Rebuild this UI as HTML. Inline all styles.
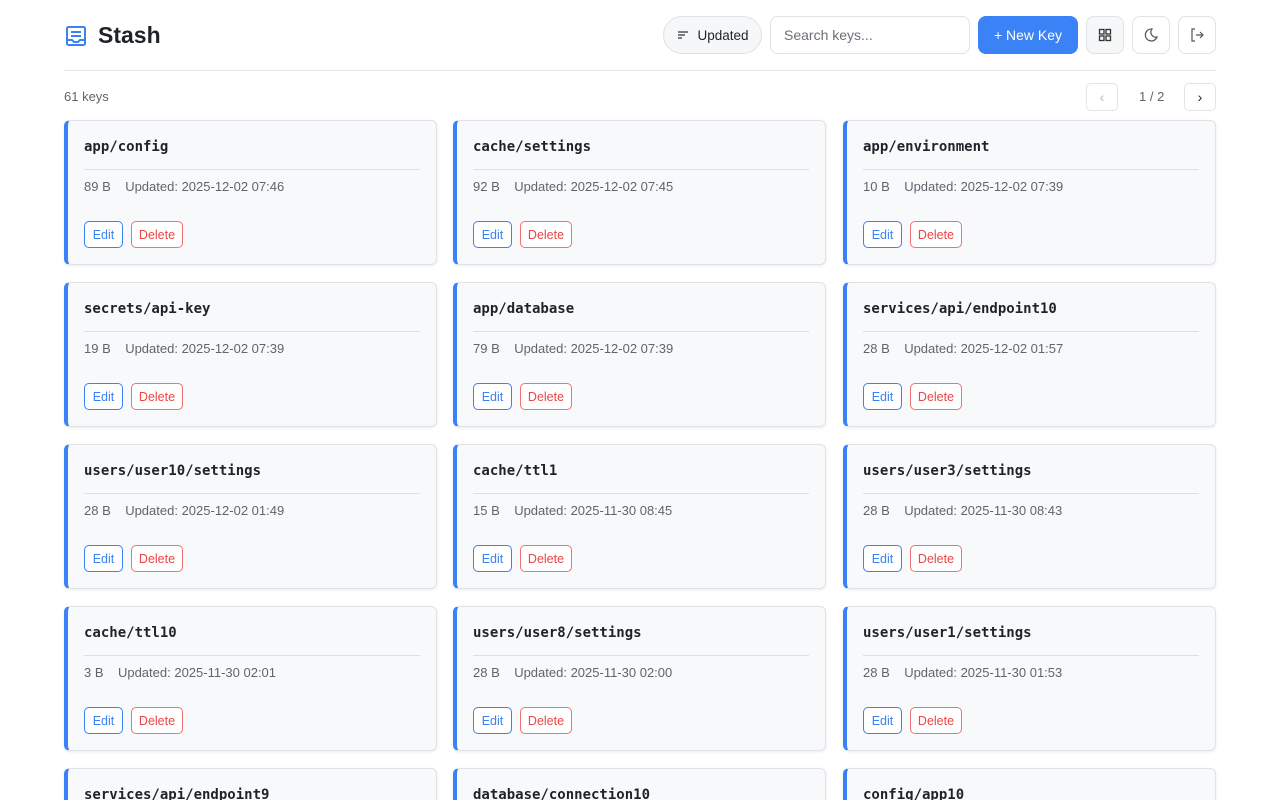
<!DOCTYPE html>
<html style="overflow:hidden;height:800px"><head><meta charset="utf-8"><style>
*{box-sizing:border-box;margin:0;padding:0}
body{width:1280px;height:800px;overflow:hidden;background:#fff;font-family:"Liberation Sans",sans-serif;color:#1f2329;position:relative}
.hdr{position:absolute;left:64px;right:64px;top:0;height:71px;border-bottom:1px solid #e3e5e8}
.logo{position:absolute;left:0;top:22px;display:flex;align-items:center}
.logo span{font-size:23px;font-weight:700;margin-left:10px;color:#1f2329}
.btn{position:absolute;top:16px;height:38px;border:1px solid #dfe2e6;border-radius:8px;background:#fff;display:flex;align-items:center;justify-content:center;font-size:14px}
.count{position:absolute;left:64px;top:89px;font-size:13px;color:#5f656d}
.pg{position:absolute;top:83px;width:32px;height:28px;border:1px solid #e1e4e8;border-radius:5px;display:flex;align-items:center;justify-content:center;font-size:14px}
.card{position:absolute;width:373px;height:145px;background:#f8f9fb;border:1px solid #dfe2e7;border-left:4px solid #3b82f6;border-radius:6px;box-shadow:0 1px 3px rgba(0,0,0,.08);overflow:hidden}
.card .t{position:absolute;left:16px;top:18px;font-family:"DejaVu Sans Mono","Liberation Mono",monospace;font-weight:700;font-size:14px;color:#1f2329}
.card .d{position:absolute;left:16px;right:16px;top:48px;border-top:1px solid #dcdfe4}
.card .m{position:absolute;left:16px;top:58px;font-size:13px;color:#5f656d;white-space:pre}
.card .e,.card .x{position:absolute;top:100px;height:27px;border-radius:5px;font-size:12.5px;display:flex;align-items:center;justify-content:center;background:#fff}
.card .e{left:16px;width:39px;border:1px solid #3b82f6;color:#3b82f6}
.card .x{left:63px;width:52px;border:1px solid #f07272;color:#ef4444}
</style></head><body>
<div class="hdr">
 <div class="logo"><svg width="24" height="24" viewBox="0 0 24 24"><rect x="3" y="3" width="18" height="18" rx="1.5" fill="none" stroke="#3b82f6" stroke-width="2"/><path d="M7 8h10M7 12h10M3 16h5l2 2h4l2-2h5" fill="none" stroke="#3b82f6" stroke-width="2"/></svg><span>Stash</span></div>
</div>
<div class="btn" style="left:663px;width:99px;border-radius:19px;background:#f6f7f9;font-size:13.5px"><svg width="14" height="14" viewBox="0 0 14 14" style="margin-right:7px"><path d="M2 4h10M2 7h7M2 10h4" stroke="#333" stroke-width="1.3"/></svg>Updated</div>
<div class="btn" style="left:770px;width:200px;justify-content:flex-start;padding-left:13px;color:#6b7078">Search keys...</div>
<div class="btn" style="left:978px;width:100px;background:#3b82f6;border-color:#3b82f6;color:#fff">+ New Key</div>
<div class="btn" style="left:1086px;width:38px;background:#f6f7f9"><svg width="14" height="14" viewBox="0 0 14 14"><g fill="none" stroke="#333" stroke-width="1.3"><rect x="1.5" y="1.5" width="4.5" height="4.5"/><rect x="8" y="1.5" width="4.5" height="4.5"/><rect x="1.5" y="8" width="4.5" height="4.5"/><rect x="8" y="8" width="4.5" height="4.5"/></g></svg></div>
<div class="btn" style="left:1132px;width:38px"><svg width="16" height="16" viewBox="0 0 16 16"><path d="M9 2a6 6 0 1 0 5 8A5 5 0 0 1 9 2z" fill="none" stroke="#555" stroke-width="1.2"/></svg></div>
<div class="btn" style="left:1178px;width:38px"><svg width="16" height="16" viewBox="0 0 16 16"><path d="M6 2H3v12h3M7 8h7M11 5l3 3-3 3" fill="none" stroke="#555" stroke-width="1.2"/></svg></div>
<div class="count">61 keys</div>
<div class="pg" style="left:1086px;color:#bbb">‹</div>
<div style="position:absolute;left:1139px;top:89px;font-size:13px;color:#5f656d">1 / 2</div>
<div class="pg" style="left:1184px;color:#222">›</div>

<div class="card" style="left:64px;top:120px"><div class="t">app/config</div><div class="d"></div><div class="m">89 B    Updated: 2025-12-02 07:46</div><div class="e">Edit</div><div class="x">Delete</div></div>
<div class="card" style="left:453px;top:120px"><div class="t">cache/settings</div><div class="d"></div><div class="m">92 B    Updated: 2025-12-02 07:45</div><div class="e">Edit</div><div class="x">Delete</div></div>
<div class="card" style="left:843px;top:120px"><div class="t">app/environment</div><div class="d"></div><div class="m">10 B    Updated: 2025-12-02 07:39</div><div class="e">Edit</div><div class="x">Delete</div></div>

<div class="card" style="left:64px;top:282px"><div class="t">secrets/api-key</div><div class="d"></div><div class="m">19 B    Updated: 2025-12-02 07:39</div><div class="e">Edit</div><div class="x">Delete</div></div>
<div class="card" style="left:453px;top:282px"><div class="t">app/database</div><div class="d"></div><div class="m">79 B    Updated: 2025-12-02 07:39</div><div class="e">Edit</div><div class="x">Delete</div></div>
<div class="card" style="left:843px;top:282px"><div class="t">services/api/endpoint10</div><div class="d"></div><div class="m">28 B    Updated: 2025-12-02 01:57</div><div class="e">Edit</div><div class="x">Delete</div></div>

<div class="card" style="left:64px;top:444px"><div class="t">users/user10/settings</div><div class="d"></div><div class="m">28 B    Updated: 2025-12-02 01:49</div><div class="e">Edit</div><div class="x">Delete</div></div>
<div class="card" style="left:453px;top:444px"><div class="t">cache/ttl1</div><div class="d"></div><div class="m">15 B    Updated: 2025-11-30 08:45</div><div class="e">Edit</div><div class="x">Delete</div></div>
<div class="card" style="left:843px;top:444px"><div class="t">users/user3/settings</div><div class="d"></div><div class="m">28 B    Updated: 2025-11-30 08:43</div><div class="e">Edit</div><div class="x">Delete</div></div>

<div class="card" style="left:64px;top:606px"><div class="t">cache/ttl10</div><div class="d"></div><div class="m">3 B    Updated: 2025-11-30 02:01</div><div class="e">Edit</div><div class="x">Delete</div></div>
<div class="card" style="left:453px;top:606px"><div class="t">users/user8/settings</div><div class="d"></div><div class="m">28 B    Updated: 2025-11-30 02:00</div><div class="e">Edit</div><div class="x">Delete</div></div>
<div class="card" style="left:843px;top:606px"><div class="t">users/user1/settings</div><div class="d"></div><div class="m">28 B    Updated: 2025-11-30 01:53</div><div class="e">Edit</div><div class="x">Delete</div></div>

<div class="card" style="left:64px;top:768px;height:32px;border-bottom:none;border-radius:6px 6px 0 0"><div class="t">services/api/endpoint9</div></div>
<div class="card" style="left:453px;top:768px;height:32px;border-bottom:none;border-radius:6px 6px 0 0"><div class="t">database/connection10</div></div>
<div class="card" style="left:843px;top:768px;height:32px;border-bottom:none;border-radius:6px 6px 0 0"><div class="t">config/app10</div></div>
</body></html>
